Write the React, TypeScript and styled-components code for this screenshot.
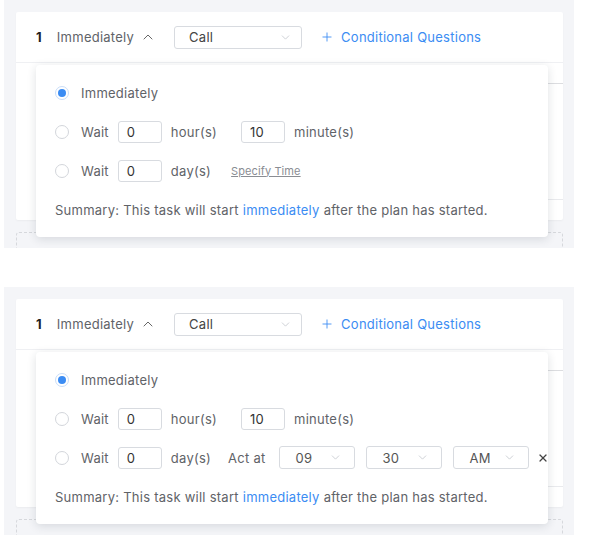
import React from "react";
import styled, { createGlobalStyle } from "styled-components";
import { ChevronDown, ChevronUp, Plus, X } from "lucide-react";

const GlobalStyle = createGlobalStyle`
  body {
    margin: 0;
    background: #ffffff;
    font-family: Inter, "Noto Sans", "Liberation Sans", sans-serif;
    font-size: 13px;
    letter-spacing: 0.25px;
    color: #5f6368;
  }
`;

const BLUE = "#3b8cf3";

const Page = styled.div`
  display: flex;
  flex-direction: column;
  gap: 39px;
  padding-left: 4px;
`;

const Panel = styled.div`
  position: relative;
  width: 570px;
  height: 248px;
  box-sizing: border-box;
  padding: 12px 11px 0 12px;
  background: #f4f5f8;
  overflow: hidden;
`;

const Card = styled.div`
  background: #fff;
  height: 208px;
  border-radius: 2px;
  box-shadow: 0 1px 2px rgba(0, 0, 0, 0.04);
  display: flex;
  flex-direction: column;
`;

const Header = styled.div`
  height: 51px;
  box-sizing: border-box;
  display: flex;
  align-items: center;
  padding: 0 20px;
  border-bottom: 1px solid #eff0f3;
  white-space: nowrap;
`;

const Index = styled.span`
  font-weight: 700;
  color: #222;
  margin-right: 15px;
`;

const Trigger = styled.span`
  display: inline-flex;
  align-items: center;
  gap: 6px;
  color: #606368;
  margin-right: 18px;
`;

const SelectBox = styled.div<{ w: number }>`
  width: ${(p) => p.w}px;
  height: 23px;
  box-sizing: border-box;
  border: 1px solid #d8dbe0;
  border-radius: 3px;
  display: flex;
  align-items: center;
  justify-content: space-between;
  padding: 0 9px 0 14px;
  color: #444;
  background: #fff;
`;

const AddLink = styled.span`
  display: inline-flex;
  align-items: center;
  gap: 7px;
  color: ${BLUE};
  margin-left: 18px;
`;

const CardBody = styled.div`
  flex: 1;
  padding: 20px 0 0 20px;
`;

const InnerBox = styled.div`
  height: 115px;
  border-top: 1px solid #dcdde0;
  border-bottom: 1px solid #e9eaed;
`;

const Dashed = styled.div`
  margin-top: 12px;
  height: 30px;
  border: 1px dashed #d6d8dc;
  border-bottom: none;
  border-radius: 3px 3px 0 0;
`;

const Popup = styled.div`
  position: absolute;
  left: 32px;
  top: 65px;
  width: 512px;
  height: 172px;
  box-sizing: border-box;
  background: #fff;
  border-radius: 4px;
  box-shadow: 0 2px 10px rgba(30, 40, 60, 0.14);
  padding: 8px 19px 0;
`;

const Row = styled.div`
  height: 39px;
  display: flex;
  align-items: center;
  white-space: nowrap;
  color: #5f6368;
`;

const Radio = styled.span<{ checked?: boolean }>`
  width: 14px;
  height: 14px;
  flex: none;
  box-sizing: border-box;
  border-radius: 50%;
  border: 1px solid ${(p) => (p.checked ? "#c9ddf8" : "#d3d6db")};
  display: inline-flex;
  align-items: center;
  justify-content: center;
  margin-right: 12px;
  &::after {
    content: "";
    width: 8px;
    height: 8px;
    border-radius: 50%;
    background: ${(p) => (p.checked ? BLUE : "transparent")};
  }
`;

const NumInput = styled.span<{ lead?: number }>`
  width: 44px;
  height: 22px;
  flex: none;
  box-sizing: border-box;
  border: 1px solid #d8dbe0;
  border-radius: 3px;
  display: inline-flex;
  align-items: center;
  padding-left: 8px;
  color: #333;
  margin: 0 9px 0 ${(p) => p.lead ?? 9}px;
`;

const SmallLink = styled.span`
  font-size: 11px;
  letter-spacing: 0.1px;
  color: #8a8d93;
  text-decoration: underline;
  margin-left: 20px;
`;

const ActLabel = styled.span`
  margin: 0 14px 0 17px;
`;

const TimeSelect = styled(SelectBox)`
  flex: none;
  padding: 0 12px 0 15px;
  margin-right: 11px;
  color: #555;
`;

const Close = styled.span`
  flex: none;
  display: inline-flex;
  margin-left: -3px;
  color: #444;
`;

const Summary = styled.div`
  height: 39px;
  display: flex;
  align-items: center;
  white-space: nowrap;
  color: #5f6368;
`;

const Accent = styled.span`
  color: ${BLUE};
  margin: 0 4px;
`;

const Select = ({ value, w }: { value: string; w: number }) => (
  <SelectBox w={w}>
    <span>{value}</span>
    <ChevronDown size={13} color="#c3c6cc" strokeWidth={1.5} />
  </SelectBox>
);

const TimePicker = ({ value }: { value: string }) => (
  <TimeSelect w={76}>
    <span>{value}</span>
    <ChevronDown size={13} color="#c3c6cc" strokeWidth={1.5} />
  </TimeSelect>
);

const SchedulePanel = ({ withTime }: { withTime: boolean }) => (
  <Panel>
    <Card>
      <Header>
        <Index>1</Index>
        <Trigger>
          Immediately <ChevronUp size={16} color="#666" strokeWidth={1.5} />
        </Trigger>
        <Select value="Call" w={128} />
        <AddLink>
          <Plus size={14} strokeWidth={1.5} />
          Conditional Questions
        </AddLink>
      </Header>
      <CardBody>
        <InnerBox />
      </CardBody>
    </Card>
    <Dashed />
    <Popup>
      <Row>
        <Radio checked />
        Immediately
      </Row>
      <Row>
        <Radio />
        Wait
        <NumInput>0</NumInput>
        hour(s)
        <NumInput lead={24}>10</NumInput>
        minute(s)
      </Row>
      <Row>
        <Radio />
        Wait
        <NumInput>0</NumInput>
        day(s)
        {withTime ? (
          <>
            <ActLabel>Act at</ActLabel>
            <TimePicker value="09" />
            <TimePicker value="30" />
            <TimePicker value="AM" />
            <Close>
              <X size={12} strokeWidth={2.4} />
            </Close>
          </>
        ) : (
          <SmallLink>Specify Time</SmallLink>
        )}
      </Row>
      <Summary>
        Summary: This task will start<Accent>immediately</Accent>after the plan has started.
      </Summary>
    </Popup>
  </Panel>
);

export default function App() {
  return (
    <>
      <GlobalStyle />
      <Page>
        <SchedulePanel withTime={false} />
        <SchedulePanel withTime />
      </Page>
    </>
  );
}
